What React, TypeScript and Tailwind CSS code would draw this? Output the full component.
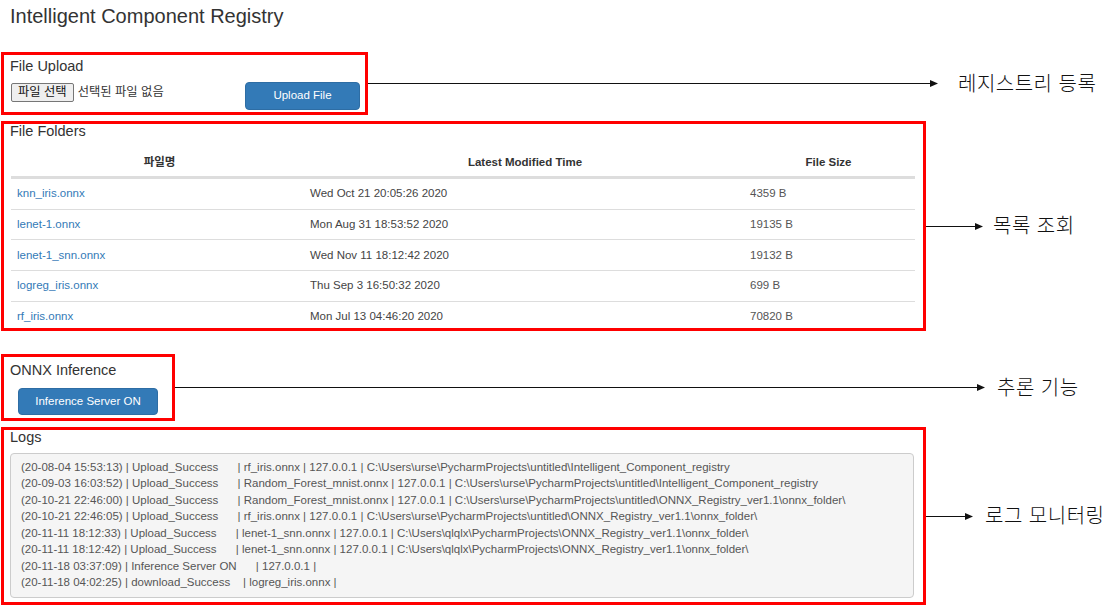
import React from "react";

const FILES = [
  { name: "knn_iris.onnx", time: "Wed Oct 21 20:05:26 2020", size: "4359 B" },
  { name: "lenet-1.onnx", time: "Mon Aug 31 18:53:52 2020", size: "19135 B" },
  { name: "lenet-1_snn.onnx", time: "Wed Nov 11 18:12:42 2020", size: "19132 B" },
  { name: "logreg_iris.onnx", time: "Thu Sep 3 16:50:32 2020", size: "699 B" },
  { name: "rf_iris.onnx", time: "Mon Jul 13 04:46:20 2020", size: "70820 B" },
];

const LOGS = [
  "(20-08-04 15:53:13) | Upload_Success      | rf_iris.onnx | 127.0.0.1 | C:\\Users\\urse\\PycharmProjects\\untitled\\Intelligent_Component_registry",
  "(20-09-03 16:03:52) | Upload_Success      | Random_Forest_mnist.onnx | 127.0.0.1 | C:\\Users\\urse\\PycharmProjects\\untitled\\Intelligent_Component_registry",
  "(20-10-21 22:46:00) | Upload_Success      | Random_Forest_mnist.onnx | 127.0.0.1 | C:\\Users\\urse\\PycharmProjects\\untitled\\ONNX_Registry_ver1.1\\onnx_folder\\",
  "(20-10-21 22:46:05) | Upload_Success      | rf_iris.onnx | 127.0.0.1 | C:\\Users\\urse\\PycharmProjects\\untitled\\ONNX_Registry_ver1.1\\onnx_folder\\",
  "(20-11-11 18:12:33) | Upload_Success      | lenet-1_snn.onnx | 127.0.0.1 | C:\\Users\\qlqlx\\PycharmProjects\\ONNX_Registry_ver1.1\\onnx_folder\\",
  "(20-11-11 18:12:42) | Upload_Success      | lenet-1_snn.onnx | 127.0.0.1 | C:\\Users\\qlqlx\\PycharmProjects\\ONNX_Registry_ver1.1\\onnx_folder\\",
  "(20-11-18 03:37:09) | Inference Server ON      | 127.0.0.1 |",
  "(20-11-18 04:02:25) | download_Success    | logreg_iris.onnx |",
];

// annotation arrow: line + filled head + korean label
function Callout({ lineClass, gapClass, label }: { lineClass: string; gapClass: string; label: string }) {
  return (
    <div className="flex items-center">
      <div className={`h-px bg-[#111] ${lineClass}`} />
      <svg width="8" height="7" viewBox="0 0 8 7" className="flex-none">
        <path d="M0 0 L8 3.5 L0 7 Z" fill="#111" />
      </svg>
      <span className={`text-[20px] leading-[24px] font-light tracking-[0.5px] text-[#111] ${gapClass}`}>{label}</span>
    </div>
  );
}

export default function App() {
  return (
    <div className="w-[1116px] h-[607px] overflow-hidden bg-white text-[#333] font-['Liberation_Sans','Noto_Sans_CJK_KR',sans-serif]">
      <h1 className="pl-[10px] pt-[4px] text-[20px] leading-[24px] font-normal">Intelligent Component Registry</h1>

      {/* File Upload */}
      <div className="mt-[24px] pl-[1px] flex items-center">
        <div className="w-[367px] h-[63px] border-[3px] border-[#ff0000] pl-[6px] pr-[5px] flex-none">
          <div className="mt-[3px] text-[14.5px] leading-[17px]">File Upload</div>
          <div className="mt-[7px] flex items-start justify-between">
            <div className="mt-[1px] ml-[1px] flex items-center gap-[4px] text-[12.3px]">
              <button className="h-[19px] px-[6px] border border-[#767676] rounded-[2px] bg-[#efefef] text-[#111] leading-[17px]">
                파일 선택
              </button>
              <span className="text-[#333]">선택된 파일 없음</span>
            </div>
            <button className="w-[115px] h-[28px] rounded-[4px] bg-[#337ab7] border border-[#2e6da4] text-white text-[11.5px]">
              Upload File
            </button>
          </div>
        </div>
        <Callout lineClass="w-[562px]" gapClass="ml-[20px]" label="레지스트리 등록" />
      </div>

      {/* File Folders */}
      <div className="mt-[6px] pl-[1px] flex items-center">
        <div className="w-[925px] h-[210px] border-[3px] border-[#ff0000] pl-[6px] overflow-hidden flex-none">
          <div className="text-[14.5px] leading-[15px]">File Folders</div>
          <div className="mt-[7px] ml-[1px] w-[904px] text-[11.5px]">
            <div className="flex h-[32px] pt-[3px] border-b-2 border-[#ddd] items-center font-bold text-[#333]">
              <div className="w-[297px] text-center">파일명</div>
              <div className="w-[434px] text-center">Latest Modified Time</div>
              <div className="w-[173px] text-center">File Size</div>
            </div>
            {FILES.map((f) => (
              <div key={f.name} className="flex h-[30.7px] border-t border-[#ddd] items-center">
                <div className="w-[293px] px-[6px] text-[#337ab7]">{f.name}</div>
                <div className="w-[438px] px-[6px] text-[#444]">{f.time}</div>
                <div className="w-[173px] px-[8px] text-[#555]">{f.size}</div>
              </div>
            ))}
          </div>
        </div>
        <Callout lineClass="w-[49px]" gapClass="ml-[10px]" label="목록 조회" />
      </div>

      {/* ONNX Inference */}
      <div className="mt-[23px] pl-[1px] flex items-center">
        <div className="w-[174px] h-[67px] border-[3px] border-[#ff0000] pl-[6px] flex-none">
          <div className="mt-[5px] text-[14.5px] leading-[17px]">ONNX Inference</div>
          <button className="mt-[9px] ml-[8px] w-[140px] h-[27px] rounded-[4px] bg-[#337ab7] border border-[#2e6da4] text-white text-[11.5px]">
            Inference Server ON
          </button>
        </div>
        <Callout lineClass="w-[802px]" gapClass="ml-[12px]" label="추론 기능" />
      </div>

      {/* Logs */}
      <div className="mt-[6px] pl-[1px] flex items-center">
        <div className="w-[925px] h-[178px] border-[3px] border-[#ff0000] pl-[6px] flex-none">
          <div className="text-[14.5px] leading-[14px]">Logs</div>
          <div className="mt-[9px] w-[904px] h-[145px] border border-[#ccc] rounded-[4px] bg-[#f5f5f5] pt-[5px] px-[10px] text-[11.5px] leading-[16.43px] text-[#555] whitespace-pre">
            {LOGS.map((l, i) => (
              <div key={i}>{l}</div>
            ))}
          </div>
        </div>
        <Callout lineClass="w-[39px]" gapClass="ml-[12px]" label="로그 모니터링" />
      </div>
    </div>
  );
}
